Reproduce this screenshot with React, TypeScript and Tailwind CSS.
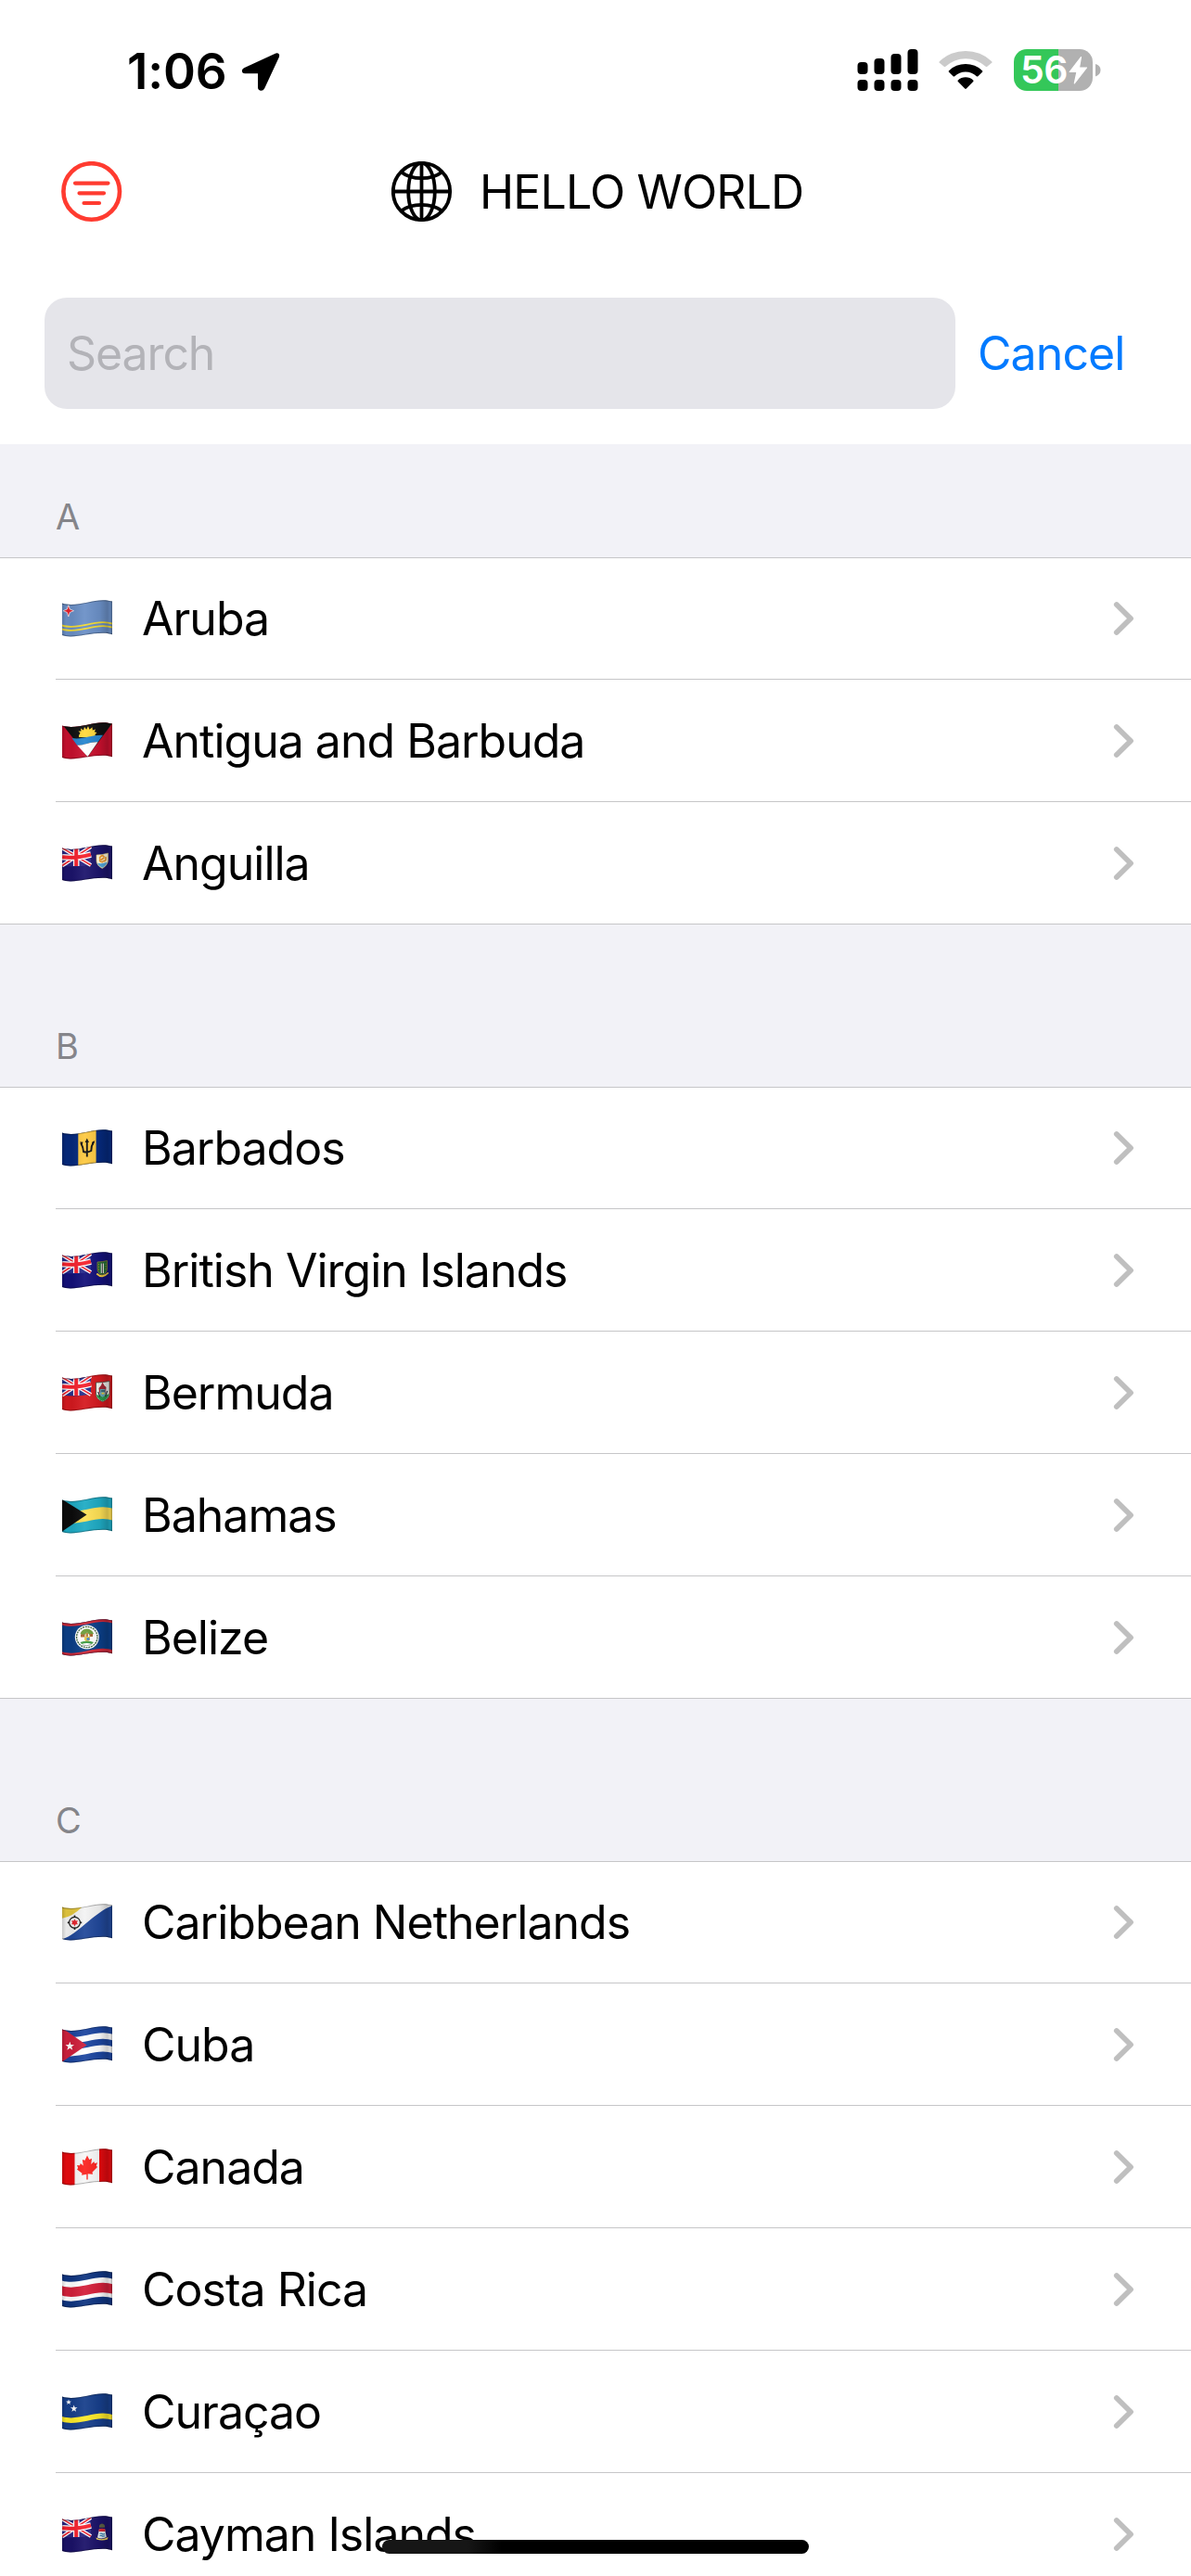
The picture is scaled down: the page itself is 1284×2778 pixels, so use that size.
import { useState } from 'react';
import type { ReactNode } from 'react';

interface Country {
  code: string;
  name: string;
}

interface Section {
  letter: string;
  countries: Country[];
}

const sections: Section[] = [
  {
    letter: 'A',
    countries: [
      { code: 'aw', name: 'Aruba' },
      { code: 'ag', name: 'Antigua and Barbuda' },
      { code: 'ai', name: 'Anguilla' },
    ],
  },
  {
    letter: 'B',
    countries: [
      { code: 'bb', name: 'Barbados' },
      { code: 'vg', name: 'British Virgin Islands' },
      { code: 'bm', name: 'Bermuda' },
      { code: 'bs', name: 'Bahamas' },
      { code: 'bz', name: 'Belize' },
    ],
  },
  {
    letter: 'C',
    countries: [
      { code: 'bq', name: 'Caribbean Netherlands' },
      { code: 'cu', name: 'Cuba' },
      { code: 'ca', name: 'Canada' },
      { code: 'cr', name: 'Costa Rica' },
      { code: 'cw', name: 'Curaçao' },
      { code: 'ky', name: 'Cayman Islands' },
    ],
  },
];

// Horizontal stripe that follows the wave of the cloth
function Band({ from, to, fill }: { from: number; to: number; fill: string }) {
  const d = `M0 ${from} C14 ${from + 4.6} 30 ${from - 3.4} 44 ${from - 3.4} C48 ${from - 3.4} 52 ${from - 2.6} 54 ${from - 2}
    V${to - 2} C52 ${to - 2.6} 48 ${to - 3.4} 44 ${to - 3.4} C30 ${to - 3.4} 14 ${to + 4.6} 0 ${to} Z`;
  return <path d={d} fill={fill} />;
}

function UnionJack({ blue }: { blue: string }) {
  return (
    <g>
      <path d="M0 2 Q14 6 31 1 V21.500 Q14 25 0 22.500Z" fill={blue} />
      <path d="M0 3.500 L31 22 M0 22.500 L31 2" stroke="#fff" strokeWidth="4" />
      <path d="M0 3.500 L31 22 M0 22.500 L31 2" stroke="#ee2431" strokeWidth="1.500" />
      <path d="M15.200 2 V23 M0 13.300 Q14 15 31 10.500" stroke="#fff" strokeWidth="6.600" fill="none" />
      <path d="M15.200 2 V23 M0 13.300 Q14 15 31 10.500" stroke="#f6222e" strokeWidth="4" fill="none" />
    </g>
  );
}

function Star({ x, y, r, fill = '#fff' }: { x: number; y: number; r: number; fill?: string }) {
  const points = Array.from({ length: 10 }, (_, i) => {
    const a = -Math.PI / 2 + (i * Math.PI) / 5;
    const len = i % 2 ? r * 0.4 : r;
    return `${x + len * Math.cos(a)},${y + len * Math.sin(a)}`;
  }).join(' ');
  return <polygon points={points} fill={fill} />;
}

const flagArt: Record<string, ReactNode> = {
  aw: (
    <>
      <rect width="54" height="40" fill="#6b90c7" />
      <Band from={26.6} to={28.4} fill="#f4dc32" />
      <Band from={30.6} to={32.4} fill="#f4dc32" />
      <path d="M6.800 5.500 L8.300 10 L12.500 11.700 L8.300 13.400 L6.800 18 L5.300 13.400 L1 11.700 L5.300 10Z" fill="#e8202c" stroke="#fff" strokeWidth=".7" />
    </>
  ),
  ag: (
    <>
      <rect width="54" height="40" fill="#c8102e" />
      <path d="M0 2 L27.500 37 L54 1 L54 -4 H0Z" fill="#111" />
      <path d="M18 14 L19.500 11.500 L17.500 9.500 L20.500 9.600 L20 6.600 L23 8.500 L24 5 L26.200 7.700 L28 4 L29.500 7.700 L32.500 5.200 L32.800 8.400 L36 7.500 L34.800 10.300 L37.500 11 L35.500 13 L36 16 H18Z" fill="#ffd93b" />
      <path d="M10.500 17 C22 19 32 13 44 13.800 L38.500 21.300 C31 20.500 25 24.500 16.200 24.800Z" fill="#2686cf" />
      <path d="M16.200 24.800 C25 24.500 31 20.500 38.500 21.300 L27.500 37Z" fill="#fff" />
    </>
  ),
  ai: (
    <>
      <rect width="54" height="40" fill="#1c146c" />
      <UnionJack blue="#2b2583" />
      <path d="M37 11 Q43 11 49.500 9 V16 C49.500 21 46 24 43.300 25.500 C40 24 37 21 37 17Z" fill="#fffbe0" stroke="#d8c574" strokeWidth=".6" />
      <path d="M38 19.800 Q43 21 48.500 18.800 C47.500 22 45.500 23.800 43.300 24.700 C41 23.700 38.800 22 38 19.800Z" fill="#55a9df" />
      <path d="M40.500 14 Q43 10.500 45 12.500 M47 13.500 Q47.500 18 44.500 17.500 M43.500 18.600 Q39.500 18.500 41 15.500 M42.500 16 L45 14" stroke="#f29a2e" strokeWidth="1.700" fill="none" strokeLinecap="round" />
    </>
  ),
  bb: (
    <>
      <rect width="54" height="40" fill="#05297c" />
      <path d="M17.300 0 H36.600 V40 H17.300Z" fill="#fdc941" />
      <path d="M20.200 14.500 Q23 20 23 24 Q27 25.300 31.300 23 Q31.300 17.500 34 13.300 M26.800 29.500 V12" stroke="#111" strokeWidth="1.900" fill="none" />
      <path d="M26.800 9.500 L29 14 H24.600Z M19 13.500 H22.500 L21.500 17Z M32 14 L35.300 12 L33.500 17Z" fill="#111" />
    </>
  ),
  vg: (
    <>
      <rect width="54" height="40" fill="#14117a" />
      <UnionJack blue="#262a8c" />
      <path d="M38 11 Q43 11 48.500 9.500 V18 C48.500 22 45.500 24 43.300 25 C40.500 24 38 22 38 18Z" fill="#1f6a35" stroke="#8c8230" strokeWidth=".8" />
      <path d="M41.700 12.500 H45 V23 H41.700Z" fill="#dfe6d8" />
      <path d="M43.300 12 V23.500" stroke="#333" strokeWidth="1" />
      <path d="M39.500 13 V21 M47 12.500 V20.500" stroke="#d0922c" strokeWidth=".7" strokeDasharray="1.200 1.500" />
      <path d="M37.300 23.500 Q43.300 29.500 49.700 22.500" stroke="#f0cb3d" strokeWidth="1.800" fill="none" />
    </>
  ),
  bm: (
    <>
      <rect width="54" height="40" fill="#d5191f" />
      <UnionJack blue="#26308c" />
      <path d="M36.500 9 Q43 9 51 7.500 V21 C51 25.500 47 28 43.700 29.500 C39.500 28 36.500 25.500 36.500 21Z" fill="#f3f3ee" stroke="#414b43" strokeWidth=".8" />
      <path d="M37 22 L43.700 24 L50.500 21 C50 25.500 46.500 27.800 43.700 29 C40.500 27.800 37.500 25.500 37 22Z" fill="#2e9a4a" />
      <path d="M43.500 8.500 L45.300 12 L47.500 14 L47 20 L45.500 23 H41.500 L40 19 L39.500 15 L42 12Z" fill="#a72735" />
      <path d="M41 16 H46.500 V22.500 L43.700 25 L41 22.500Z" fill="#62a8b8" />
      <path d="M38.700 19 L41 24.500 M48.700 18 L46.500 24 M42 18 H46" stroke="#24323a" strokeWidth="1.200" />
      <path d="M42.500 19.800 H45.500 V21.500 H42.500Z" fill="#f0cb3d" />
    </>
  ),
  bs: (
    <>
      <rect width="54" height="40" fill="#1fabc4" />
      <Band from={14.6} to={27.4} fill="#fee055" />
      <path d="M0 3 L26.500 19.500 L0 37.500Z" fill="#0b0b0b" />
    </>
  ),
  bz: (
    <>
      <rect width="54" height="40" fill="#0b3f88" />
      <Band from={-2} to={6.4} fill="#d0293a" />
      <Band from={35.2} to={44} fill="#d0293a" />
      <circle cx="26.800" cy="19.500" r="13" fill="#fff" />
      <circle cx="26.800" cy="19.500" r="11.200" fill="none" stroke="#35603a" strokeWidth="1.300" strokeDasharray="2 .8" />
      <path d="M19.500 16 Q21 11 26 10.500 Q32 10.500 34 16 L30 17.500 L27 14.500 L23 18Z" fill="#6d9d3b" />
      <path d="M20 16.500 H24.500 V19.500 H20Z M29.500 16 H33 V19 H29.500Z" fill="#a9652f" />
      <path d="M25.500 15 H28 V25 H25.500Z" fill="#b7863d" />
      <path d="M24 19 H30 V22.500 L27 25 L24 22.500Z" fill="#e7c84a" />
      <path d="M26.500 20 H29.500 V23 H26.500Z" fill="#4a8ac2" />
      <path d="M19.500 25 Q27 22.500 34 25 L32 27 Q27 25 21 27Z" fill="#3e9b42" />
      <path d="M22 28 Q27 29.500 31.500 27.500" stroke="#9c9c9c" strokeWidth="1" fill="none" />
    </>
  ),
  bq: (
    <>
      <rect width="54" height="40" fill="#f3f3f3" />
      <path d="M0 2 L0 15.800 Q11 14 21 4 V0 H0Z" fill="#e4c73f" />
      <path d="M0 38.500 C18 32 34 10 54 2 V40 H0Z" fill="#21489a" />
      <circle cx="13.500" cy="20.300" r="5.900" fill="none" stroke="#1d1d1d" strokeWidth="1.200" />
      <path d="M13.500 12.600 V15 M13.500 25.800 V28 M5.800 20.300 H8 M19 20.300 H21.200" stroke="#1d1d1d" strokeWidth="1.700" />
      <path d="M13.500 16.500 L14.700 18.500 L17 18.300 L15.900 20.300 L17 22.300 L14.700 22.300 L13.500 24.400 L12.300 22.300 L10 22.300 L11.100 20.300 L10 18.300 L12.300 18.500Z" fill="#e5252f" />
    </>
  ),
  cu: (
    <>
      <rect width="54" height="40" fill="#1d46a0" />
      <Band from={10.6} to={17.2} fill="#fff" />
      <Band from={24} to={31} fill="#fff" />
      <path d="M0 2 L26.500 20.500 L0 38.500Z" fill="#cf1f3c" />
      <Star x={8.300} y={21.700} r={5} />
    </>
  ),
  ca: (
    <>
      <rect width="54" height="40" fill="#f7f7f7" />
      <path d="M0 0 H13.500 V40 H0Z M40 0 H54 V40 H40Z" fill="#e60a0f" />
      <path d="M27 7.500 L29.300 12 L32 10.700 L31.200 17 L34.300 14 L35 16 L38 15.300 L36.800 18.600 L38 20 L32.500 25.500 L33 27.700 L27.700 27.300 V33.500 H26.300 V27.800 L21 28.800 L21.500 26.700 L16 22.500 L17.200 21 L16 18 L19 18.300 L19.800 16 L22.800 18.500 L21.800 12 L24.500 12.700Z" fill="#fb2420" />
    </>
  ),
  cr: (
    <>
      <rect width="54" height="40" fill="#0f3581" />
      <Band from={10.4} to={31.2} fill="#fff" />
      <Band from={16.2} to={26.6} fill="#d4203a" />
    </>
  ),
  cw: (
    <>
      <rect width="54" height="40" fill="#173f8b" />
      <Band from={25} to={30.6} fill="#fdea2a" />
      <Star x={7} y={9.600} r={3.100} />
      <Star x={12.700} y={16.600} r={4} />
    </>
  ),
  ky: (
    <>
      <rect width="54" height="40" fill="#1b1269" />
      <UnionJack blue="#2b2583" />
      <path d="M40 14.500 H46 L47.800 23 Q43 25.500 38 23.500Z" fill="#e7eef0" />
      <path d="M39.500 14.500 Q43 13 46.500 14.500 V17 H39.500Z" fill="#d82b35" />
      <path d="M40.500 19.500 Q42 18.500 43 19.500 T46 19.500 M40.500 21.800 Q42 21 43 21.800 T46 21.800" stroke="#2e7cae" strokeWidth="1.200" fill="none" />
      <path d="M40 12.800 Q39.500 9 43 8.500 Q46.500 9 46 12.800Z" fill="#5c6045" />
      <path d="M36.500 23.500 Q43 27 49.500 23 L49 25.500 Q43 27.500 37 25.500Z" fill="#f0d45a" />
    </>
  ),
};

function Flag({ code }: { code: string }) {
  return (
    <svg width="54" height="40" viewBox="0 0 54 40" className="shrink-0">
      <defs>
        <clipPath id={`cloth-${code}`}>
          <path d="M0 3.600 C14 8.200 30 .2 44 .2 C48 .2 52 .9 54 1.600 V37.300 C52 36.500 48 35.800 44 35.800 C30 35.800 20 39.400 9 39.400 C5 39.400 2 38.800 0 38Z" />
        </clipPath>
        <linearGradient id={`fold-${code}`}>
          <stop offset="0" stopColor="#000" stopOpacity=".18" />
          <stop offset=".08" stopColor="#000" stopOpacity=".04" />
          <stop offset=".2" stopColor="#000" stopOpacity=".06" />
          <stop offset=".45" stopColor="#fff" stopOpacity=".06" />
          <stop offset=".75" stopColor="#000" stopOpacity=".06" />
          <stop offset=".9" stopColor="#000" stopOpacity=".2" />
          <stop offset=".96" stopColor="#000" stopOpacity=".12" />
          <stop offset="1" stopColor="#000" stopOpacity=".35" />
        </linearGradient>
      </defs>
      <g clipPath={`url(#cloth-${code})`}>
        {flagArt[code]}
        <rect width="54" height="40" fill={`url(#fold-${code})`} />
        <path
          d="M0 3.600 C14 8.200 30 .2 44 .2 C48 .2 52 .9 54 1.600 M54 37.300 C52 36.500 48 35.800 44 35.800 C30 35.800 20 39.400 9 39.400 C5 39.400 2 38.800 0 38"
          fill="none"
          stroke="#000"
          strokeOpacity=".28"
          strokeWidth="2"
        />
      </g>
    </svg>
  );
}

function StatusBar() {
  return (
    <div className="flex h-[152px] items-start justify-between pl-[137px] pr-[97px] pt-[53px]">
      <div className="flex h-[48px] items-center">
        <span className="w-[122px] text-[53px] font-semibold leading-[48px] tracking-[-0.2px]">1:06</span>
        <svg width="43" height="44" viewBox="0 0 43 44">
          <path d="M38.700 3.500 L4.500 19.200 C1.800 20.700 2.500 23.200 5 23.200 H20 V39.300 C20 42 23.800 42.600 25.200 40 L41 6 C41.700 4 40.500 2.700 38.700 3.500Z" fill="#000" stroke="#000" strokeWidth="2" strokeLinejoin="round" />
        </svg>
      </div>
      <div className="flex h-[46px] items-start">
        <svg width="66" height="46" viewBox="0 0 66 46">
          <rect x=".5" y="14" width="11" height="13" rx="4" />
          <rect x="18.500" y="10" width="11" height="17" rx="4" />
          <rect x="36.500" y="5" width="11" height="22" rx="4" />
          <rect x="54.500" y="0" width="11" height="27" rx="4" />
          <rect x=".5" y="33" width="11" height="12" rx="4" />
          <rect x="18.500" y="33" width="11" height="12" rx="4" />
          <rect x="36.500" y="33" width="11" height="12" rx="4" />
          <rect x="54.500" y="33" width="11" height="12" rx="4" />
        </svg>
        <svg width="58" height="46" viewBox="0 0 58 46" className="ml-[22px]">
          <path d="M.8 14.800 Q0 14 .8 13.200 A41 41 0 0 1 57.200 13.200 Q58 14 57.200 14.800 L52.300 18.800 Q51.500 19.600 50.700 18.800 A31.500 31.500 0 0 0 7.300 18.800 Q6.500 19.600 5.700 18.800Z" fill="#cbcbcb" />
          <path d="M11 24.800 Q10.200 24 11 23.200 A26 26 0 0 1 47 23.200 Q47.800 24 47 24.800 L42.400 29.200 Q41.600 30 40.800 29.200 A17 17 0 0 0 17.200 29.200 Q16.400 30 15.600 29.200Z" />
          <path d="M20.800 34.900 Q20 34.100 20.800 33.400 A12 12 0 0 1 37.200 33.400 Q38 34.100 37.200 34.900 L29.800 42.500 Q29 43.300 28.200 42.500Z" />
        </svg>
        <div className="ml-[23px] flex h-[45px] w-[85px] items-center rounded-[14px] bg-[linear-gradient(to_right,#34c759_48px,#b1b1b1_48px)] pl-[7px] text-white">
          <span className="w-[52px] text-[41px] font-semibold leading-[45px] tracking-[-0.6px]">56</span>
          <svg width="21" height="32" viewBox="0 0 21 32" className="shrink-0">
            <path d="M13.500 1.500 L1.200 17.500 H9 L6.300 30 L19.500 13 H11.500Z" fill="#fff" stroke="#fff" strokeWidth="1.200" strokeLinejoin="round" />
          </svg>
        </div>
        <svg width="6" height="45" viewBox="0 0 6 45" className="ml-[3px]">
          <path d="M0 16 Q5.500 17.500 5.500 22.500 T0 29.500Z" fill="#b1b1b1" />
        </svg>
      </div>
    </div>
  );
}

function NavBar() {
  return (
    <header className="flex h-[110px] items-center pl-[66px]">
      <svg width="66" height="66" viewBox="0 0 66 66" fill="none" stroke="#ff3b30" strokeLinecap="round">
        <circle cx="32.700" cy="32.500" r="30.300" strokeWidth="4.600" />
        <path d="M15 23.600 H50.500 M19.500 34.300 H46 M24.500 45 H41" strokeWidth="4.200" />
      </svg>
      <div className="ml-[290px] flex items-center gap-[29px]">
        <svg width="66" height="66" viewBox="0 0 66 66" fill="none" stroke="#000" strokeWidth="3.800">
          <circle cx="32.500" cy="32.500" r="30.700" />
          <ellipse cx="32.500" cy="32.500" rx="14.300" ry="30.700" />
          <path d="M32.500 2 V63 M2 32.500 H63" />
          <path d="M10.500 11.500 Q19 18.200 32.500 18.200 T54.500 11.500 M10.500 53.500 Q19 46.800 32.500 46.800 T54.500 53.500" />
        </svg>
        <h1 className="text-[50px] leading-[60px] tracking-[-0.85px]">HELLO WORLD</h1>
      </div>
    </header>
  );
}

function CountryRow({ country, last }: { country: Country; last: boolean }) {
  return (
    <li className={`h-[132px] first:shadow-[inset_0_1px_0_#c6c6c8] ${last ? 'border-b border-[#c6c6c8]' : 'pl-[60px]'}`}>
      <div className={`flex items-center pr-[60px] ${last ? 'h-[131px] pl-[67px]' : 'h-[132px] border-b border-[#c6c6c8] pl-[7px]'}`}>
        <Flag code={country.code} />
        <span className="ml-[32px] flex-1 text-[50px] leading-[60px] tracking-[-1px]">{country.name}</span>
        <svg width="24" height="38" viewBox="0 0 24 38">
          <path d="M3.800 4 L19 19 L3.800 34" fill="none" stroke="#bfbfbf" strokeWidth="5.800" strokeLinecap="round" strokeLinejoin="round" />
        </svg>
      </div>
    </li>
  );
}

export default function App() {
  const [query, setQuery] = useState('');

  const visible = sections
    .map((s) => ({ ...s, countries: s.countries.filter((c) => c.name.toLowerCase().includes(query.toLowerCase())) }))
    .filter((s) => s.countries.length > 0);

  return (
    <div className="relative h-[2778px] w-[1284px] overflow-hidden bg-white font-['Inter',sans-serif] text-black">
      <StatusBar />
      <NavBar />

      {/* Search */}
      <div className="flex h-[217px] items-start pl-[48px] pt-[59px]">
        <input
          type="text"
          placeholder="Search"
          value={query}
          onChange={(e) => setQuery(e.target.value)}
          className="h-[120px] w-[982px] rounded-[24px] bg-[#e5e5ea] px-[24px] text-[50px] tracking-[-1.1px] outline-none placeholder:text-[#b3b3b8]"
        />
        <button
          onClick={() => setQuery('')}
          className="ml-[24px] h-[120px] text-[50px] tracking-[-0.9px] text-[#007aff]"
        >
          Cancel
        </button>
      </div>

      {/* Countries */}
      {visible.map((section, index) => (
        <section key={section.letter}>
          <h2
            className={`flex items-end bg-[#f2f2f7] pb-[20px] pl-[60px] text-[38px] leading-[48px] text-[#85858a] ${index === 0 ? 'h-[122px]' : 'h-[175px]'}`}
          >
            {section.letter}
          </h2>
          <ul>
            {section.countries.map((country, i) => (
              <CountryRow key={country.code} country={country} last={i === section.countries.length - 1} />
            ))}
          </ul>
        </section>
      ))}

      {/* Home indicator */}
      <div className="absolute left-[412px] top-[2739px] h-[15px] w-[460px] rounded-full bg-[linear-gradient(to_right,#161616_20%,#000_28%)]" />
    </div>
  );
}
